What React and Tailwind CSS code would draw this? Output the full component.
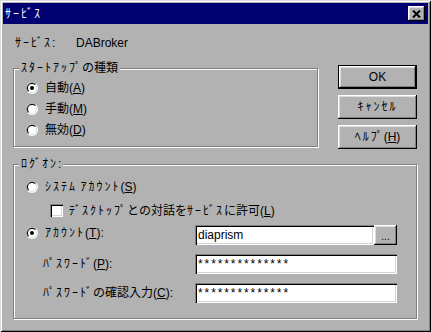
import React from 'react'

const face = 'bg-[#b2b2b2]'
const raised =
  'shadow-[inset_-1px_-1px_#000,inset_1px_1px_#fff,inset_-2px_-2px_#808080,inset_2px_2px_#dcdcdc]'
const sunken =
  'shadow-[inset_1px_1px_#808080,inset_2px_2px_#000,inset_-1px_-1px_#fff,inset_-2px_-2px_#d4d4d4]'
const etched = 'border border-[#808080] shadow-[1px_1px_0_#fff,inset_1px_1px_0_#fff]'

// half-width katakana in the old UI font run wider than Noto's, so pad each
// kana (with its dakuten kept attached) a little
function K({ children }) {
  const parts = String(children).split(/([\uFF61-\uFF9F]+)/)
  return parts.map((p, i) => {
    if (!/[\uFF61-\uFF9F]/.test(p)) return <React.Fragment key={i}>{p}</React.Fragment>
    const clusters = p.match(/[\uFF61-\uFF9F][\uFF9E\uFF9F]?/g)
    return clusters.map((c, j) => (
      <span key={i + '-' + j} className={c.length > 1 ? 'mr-[1px]' : 'mr-[2px]'}>
        {c}
      </span>
    ))
  })
}

function Radio({ checked }) {
  return (
    <svg width="12" height="12" viewBox="0 0 12 12" className="shrink-0">
      <circle cx="6" cy="6" r="6" fill="#fff" />
      <path d="M1.76 10.24 A6 6 0 0 1 10.24 1.76 Z" fill="#808080" />
      <circle cx="6" cy="6" r="5" fill="#dcdcdc" />
      <path d="M2.46 9.54 A5 5 0 0 1 9.54 2.46 Z" fill="#000" />
      <circle cx="6" cy="6" r="4" fill="#fff" />
      {checked && <circle cx="6" cy="6" r="2" fill="#000" />}
    </svg>
  )
}

function RadioRow({ checked, children, className = '' }) {
  return (
    <div className={`flex items-center gap-[7px] h-[21px] ${className}`}>
      <Radio checked={checked} />
      <span className="leading-[14px] whitespace-nowrap">{children}</span>
    </div>
  )
}

function Group({ label, className, children }) {
  return (
    <div className={`relative ${etched} ${className}`}>
      <span className={`absolute -top-[8px] left-[5px] px-[2px] leading-[14px] whitespace-nowrap ${face}`}>
        <K>{label}</K>
      </span>
      {children}
    </div>
  )
}

function Button({ children, isDefault }) {
  return (
    <div className={`w-[79px] h-[24px] ${isDefault ? 'border border-black' : ''}`}>
      <div className={`w-full h-full flex items-center justify-center leading-[14px] whitespace-nowrap ${raised}`}>
        {children}
      </div>
    </div>
  )
}

function Field({ value, className }) {
  return (
    <div className={`h-[20px] bg-white flex items-center pl-[3px] leading-[14px] ${sunken} ${className}`}>
      {value}
    </div>
  )
}

export default function App() {
  return (
    <div
      className={`w-[431px] h-[332px] ${face} text-[12px] text-black font-['Liberation_Sans','Noto_Sans_CJK_JP',sans-serif] shadow-[inset_1px_1px_#dcdcdc,inset_-1px_-1px_#000,inset_2px_2px_#fff,inset_-2px_-2px_#808080] pt-[3px] overflow-hidden`}
    >
      {/* title bar */}
      <div className="mx-[3px] h-[21px] bg-[#000070] flex items-center justify-between pl-[2px] pr-[3px]">
        <span className="text-white leading-[14px]">
          <K>ｻｰﾋﾞｽ</K>
        </span>
        <div className={`w-[17px] h-[15px] ${face} ${raised} flex items-center justify-center`}>
          <svg width="9" height="8" viewBox="0 0 9 8">
            <path d="M1 0.5 L8 7.5 M8 0.5 L1 7.5" stroke="#000" strokeWidth="2" />
          </svg>
        </div>
      </div>

      <div className="pl-[13px]">
        <div className="flex h-[14px] mt-[12px] leading-[14px] pl-[2px]">
          <span className="w-[61px]">
            <K>ｻｰﾋﾞｽ</K>:
          </span>
          <span>DABroker</span>
        </div>

        {/* startup type + buttons */}
        <div className="flex items-start mt-[15px]">
          <Group label="ｽﾀｰﾄｱｯﾌﾟの種類" className="w-[305px] h-[79px] mt-[3px] pt-[8px] pl-[12px]">
            <RadioRow checked>
              自動(<u>A</u>)
            </RadioRow>
            <RadioRow>
              手動(<u>M</u>)
            </RadioRow>
            <RadioRow>
              無効(<u>D</u>)
            </RadioRow>
          </Group>
          <div className="ml-[20px] flex flex-col gap-[6px]">
            <Button isDefault>OK</Button>
            <Button>
              <K>ｷｬﾝｾﾙ</K>
            </Button>
            <Button>
              <K>ﾍﾙﾌﾟ</K>(<u>H</u>)
            </Button>
          </div>
        </div>

        {/* logon */}
        <Group label="ﾛｸﾞｵﾝ:" className="w-[404px] h-[155px] mt-[15px] pt-[11px] pl-[12px]">
          <RadioRow>
            <K>ｼｽﾃﾑ ｱｶｳﾝﾄ</K>(<u>S</u>)
          </RadioRow>
          <div className="flex items-center gap-[6px] h-[21px] mt-[3px] pl-[24px]">
            <div className={`w-[13px] h-[13px] bg-white ${sunken}`} />
            <span className="leading-[14px] whitespace-nowrap">
              <K>ﾃﾞｽｸﾄｯﾌﾟとの対話をｻｰﾋﾞｽに許可</K>(<u>L</u>)
            </span>
          </div>
          <div className="flex items-center mt-[4px] h-[20px]">
            <RadioRow checked className="w-[169px] mb-[4px]">
              <K>ｱｶｳﾝﾄ</K>(<u>T</u>):
            </RadioRow>
            <Field value="diaprism" className="w-[179px]" />
            <div className={`w-[23px] h-[20px] ${raised} flex items-end justify-center pb-[5px] leading-[6px] text-[10px]`}>
              ...
            </div>
          </div>
          <div className="flex items-center mt-[9px] h-[20px]">
            <span className="w-[169px] pl-[17px] leading-[14px] whitespace-nowrap">
              <K>ﾊﾟｽﾜｰﾄﾞ</K>(<u>P</u>):
            </span>
            <Field value={<span className="tracking-[1.9px]">**************</span>} className="w-[202px]" />
          </div>
          <div className="flex items-center mt-[9px] h-[20px]">
            <span className="w-[169px] pl-[17px] leading-[14px] whitespace-nowrap">
              <K>ﾊﾟｽﾜｰﾄﾞ</K>の確認入力(<u>C</u>):
            </span>
            <Field value={<span className="tracking-[1.9px]">**************</span>} className="w-[202px]" />
          </div>
        </Group>
      </div>
    </div>
  )
}
